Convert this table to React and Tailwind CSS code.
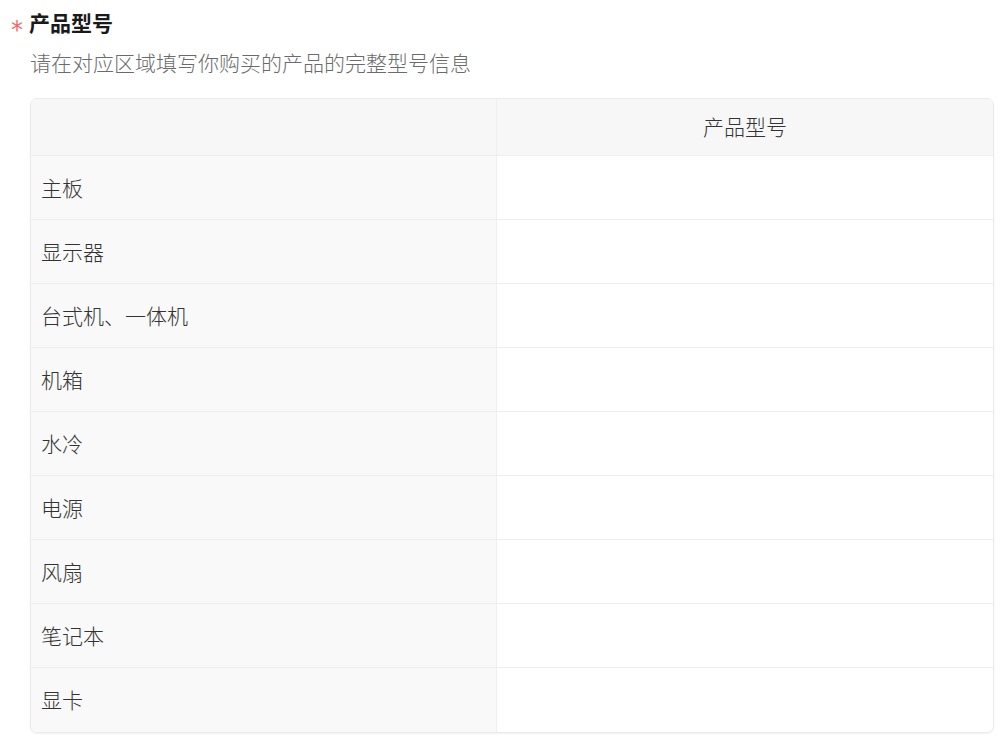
const rows = ['主板', '显示器', '台式机、一体机', '机箱', '水冷', '电源', '风扇', '笔记本', '显卡']

export default function App() {
  return (
    <div
      className="min-h-[751px] bg-white pt-[8px] pl-[10px] pr-[14px]"
      style={{ fontFamily: '"Noto Sans CJK SC", "Noto Sans", sans-serif' }}
    >
      <div className="flex items-center h-[28px]">
        <span
          className="text-[#ef6b6b] text-[24px] leading-none w-[19px] pt-[16px] pl-[1px]"
          style={{ fontFamily: '"DejaVu Sans", sans-serif' }}
        >
          *
        </span>
        <h2 className="text-[21px] font-bold text-[#1a1a1a] leading-none">产品型号</h2>
      </div>
      <p className="mt-[12px] ml-[20px] text-[21px] leading-[28px] text-[#6b6b6b] font-light">
        请在对应区域填写你购买的产品的完整型号信息
      </p>

      <div className="mt-[22px] ml-[20px] border border-[#eaeaea] rounded-[7px] overflow-hidden shadow-[0_1px_2px_rgba(0,0,0,0.06)]">
        <div className="grid grid-cols-[466px_1fr] h-[57px] bg-[#f7f7f7] border-b border-[#eeeeee]">
          <div className="border-r border-[#efefef]" />
          <div className="flex items-center justify-center text-[21px] text-[#333] font-light">产品型号</div>
        </div>
        {rows.map((r, i) => (
          <div
            key={r}
            className={`grid grid-cols-[466px_1fr] h-[64px] ${i < rows.length - 1 ? 'border-b border-[#eeeeee]' : ''}`}
          >
            <div className="flex items-center pl-[10px] bg-[#f9f9f9] border-r border-[#f0f0f0] text-[21px] text-[#333] font-light">
              {r}
            </div>
            <div className="bg-white" />
          </div>
        ))}
      </div>
    </div>
  )
}
